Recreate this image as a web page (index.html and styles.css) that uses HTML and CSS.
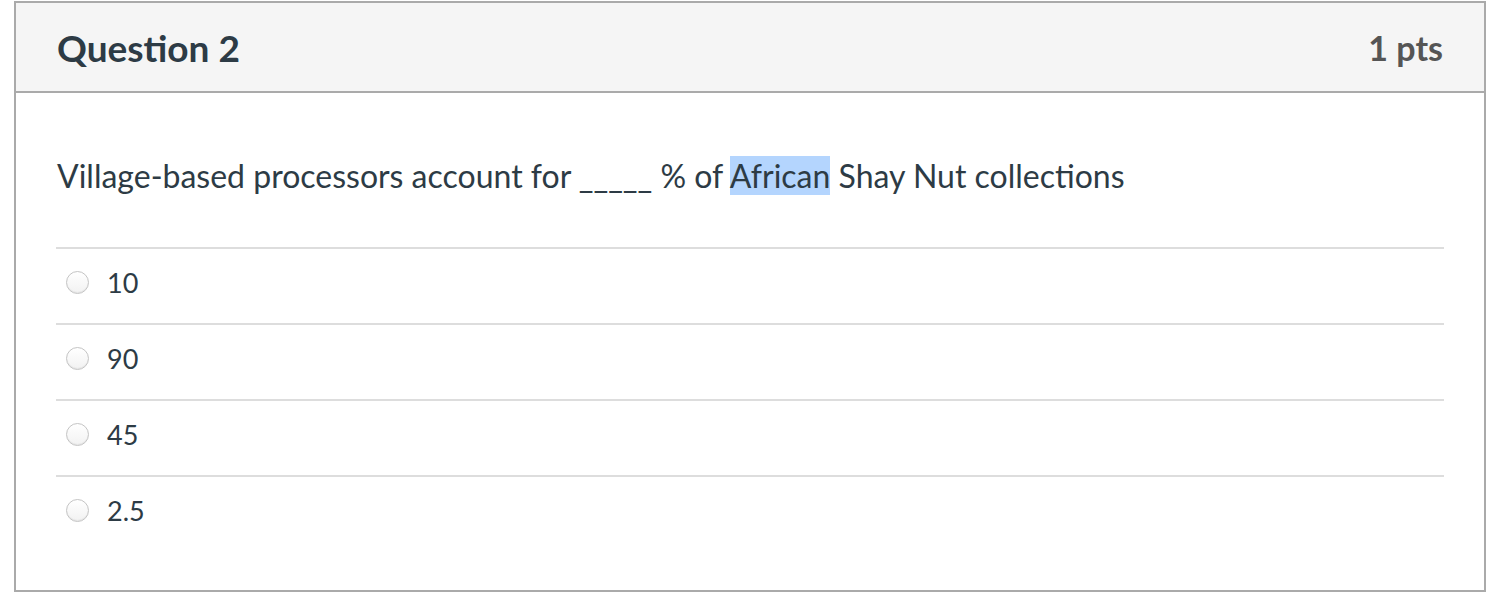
FILE: index.html
```html
<!DOCTYPE html>
<html>
<head>
<meta charset="utf-8">
<link rel="stylesheet" href="styles.css">
</head>
<body>
<div class="question">
  <div class="q-header">
    <div class="q-title">Question 2</div>
    <div class="q-points">1 pts</div>
  </div>
  <div class="q-body">
    <div class="q-text">Village-based processors account for _____ % of <span class="hl">African</span> Shay Nut collections</div>
    <div class="answers">
      <div class="answer"><span class="radio"></span><span class="label">10</span></div>
      <div class="answer"><span class="radio"></span><span class="label">90</span></div>
      <div class="answer"><span class="radio"></span><span class="label">45</span></div>
      <div class="answer"><span class="radio"></span><span class="label">2.5</span></div>
    </div>
  </div>
</div>
</body>
</html>
```
FILE: styles.css
```css
html, body {
  margin: 0;
  padding: 0;
  background: #fff;
}
body {
  font-family: Lato, "Noto Sans", sans-serif;
  color: #2d3b45;
  padding: 1px 0 0 14px;
}
.question {
  width: 1468px;
  height: 587px;
  border: 2px solid #aaaaaa;
  box-sizing: content-box;
}
.q-header {
  background: #f5f5f5;
  border-bottom: 2px solid #aaaaaa;
  height: 88px;
  display: flex;
  align-items: center;
  justify-content: space-between;
  padding: 0 41px;
}
.q-title {
  font-size: 37px;
  font-weight: 700;
  color: #2d3b45;
}
.q-points {
  font-size: 34px;
  font-weight: 700;
  color: #555555;
}
.q-body {
  padding: 0 40px;
}
.q-text {
  font-size: 32px;
  line-height: 38px;
  padding: 64px 0 0 1px;
  height: 90px;
  box-sizing: content-box;
}
.hl {
  background: #b4d5fe;
}
.answer {
  border-top: 2px solid #dddddd;
  height: 74px;
  display: flex;
  align-items: center;
  padding: 0 0 7px 10px;
  box-sizing: border-box;
  height: 76px;
}
.radio {
  width: 21px;
  height: 21px;
  border-radius: 50%;
  border: 1px solid #c4c4c4;
  background: linear-gradient(#ffffff, #f2f2f2);
  box-shadow: inset 0 -1px 1px rgba(0,0,0,0.06);
  flex: none;
}
.label {
  font-size: 27px;
  margin-left: 18px;
}
```
